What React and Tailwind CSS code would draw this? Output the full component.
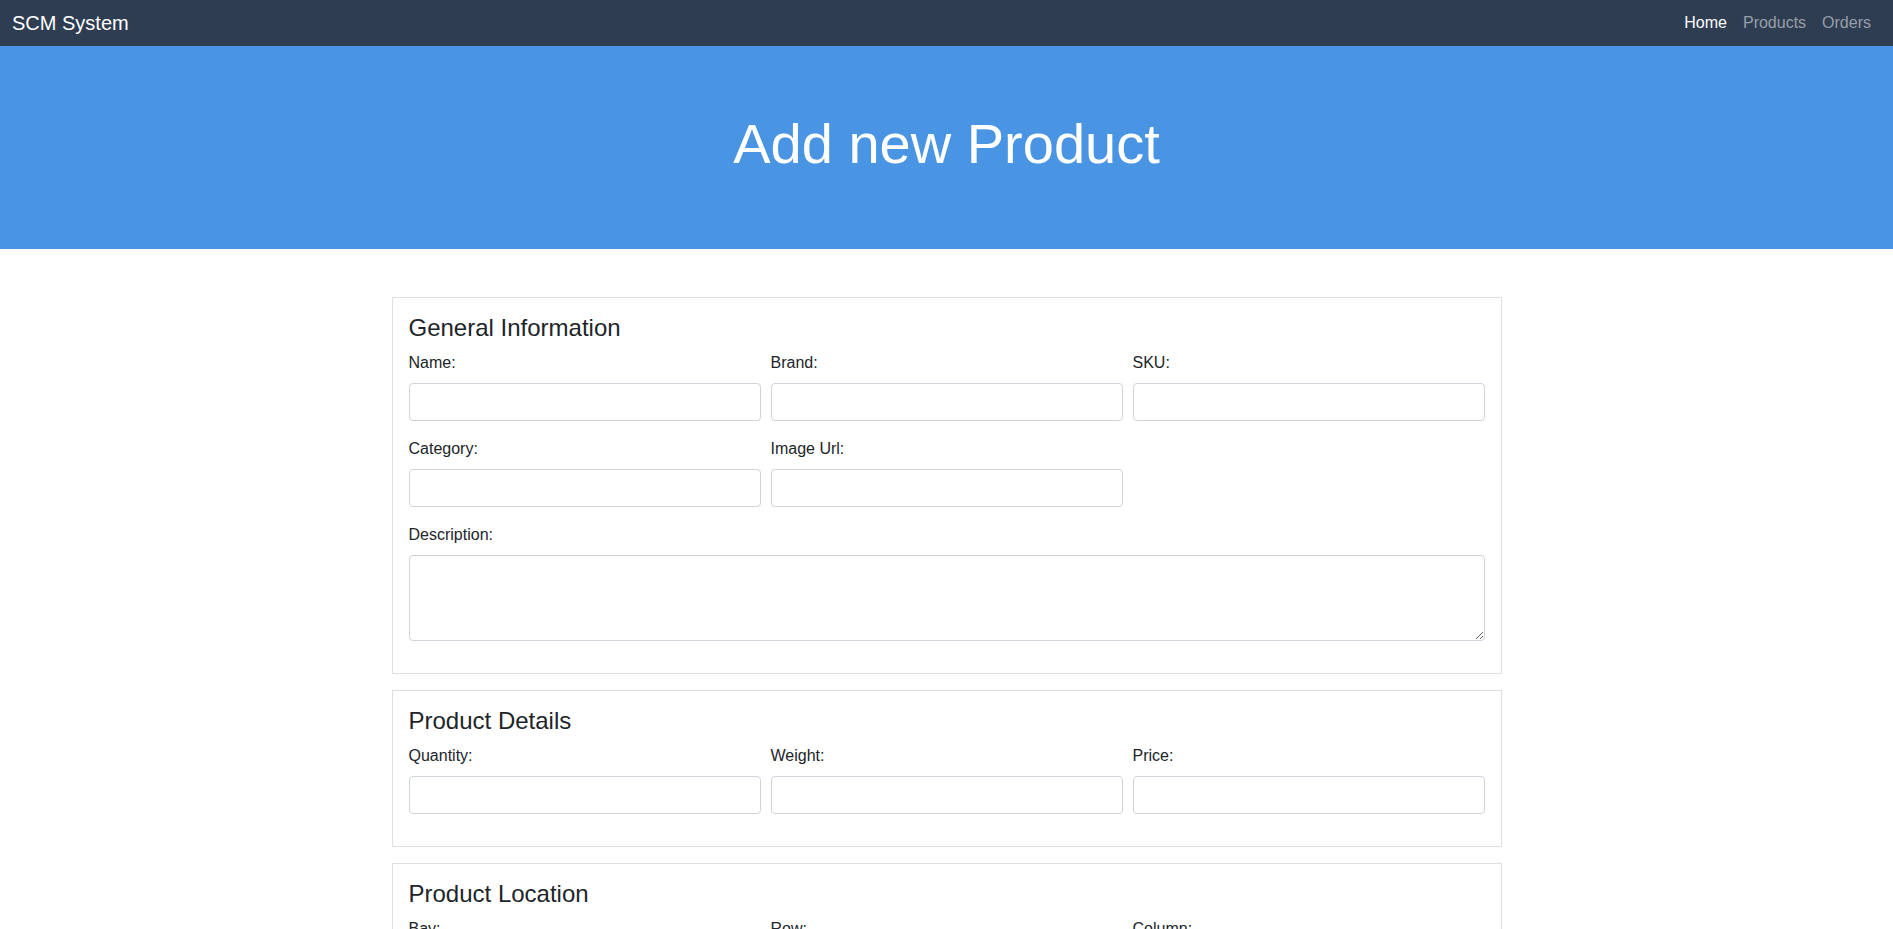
import React from 'react';

const sections = [
  {
    title: 'General Information',
    rows: [
      ['Name:', 'Brand:', 'SKU:'],
      ['Category:', 'Image Url:'],
    ],
    textarea: 'Description:',
  },
  {
    title: 'Product Details',
    rows: [['Quantity:', 'Weight:', 'Price:']],
  },
  {
    title: 'Product Location',
    rows: [['Bay:', 'Row:', 'Column:']],
  },
];

const Field = ({ label }) => (
  <div className="mb-4">
    <label className="block mb-2 text-base leading-6 text-[#212529]">{label}</label>
    <input
      type="text"
      className="block w-full h-[38px] px-3 border border-[#ced4da] rounded bg-white text-base outline-none"
    />
  </div>
);

const Section = ({ section }) => (
  <div className="mb-4 border border-[#dfdfdf] bg-white p-4">
    <h4 className="mb-2 text-2xl leading-[1.2] font-normal text-[#212529]">{section.title}</h4>
    {section.rows.map((row, i) => (
      <div key={i} className="grid grid-cols-3 gap-x-[10px]">
        {row.map(label => <Field key={label} label={label} />)}
      </div>
    ))}
    {section.textarea && (
      <div className="mb-4">
        <label className="block mb-2 text-base leading-6 text-[#212529]">{section.textarea}</label>
        <textarea
          rows={3}
          className="block w-full h-[86px] px-3 py-1.5 border border-[#ced4da] rounded bg-white text-base leading-6 outline-none"
        />
      </div>
    )}
  </div>
);

export default function App() {
  return (
    <div className="min-h-screen bg-white" style={{ fontFamily: '"Liberation Sans", Arial, sans-serif' }}>
      {/* top bar */}
      <nav className="flex items-center justify-between bg-[#2f3d52] pl-3 pr-[14px] py-2">
        <a className="text-xl leading-[30px] text-white">SCM System</a>
        <ul className="flex">
          <li><a className="block px-2 text-base leading-6 text-white">Home</a></li>
          <li><a className="block px-2 text-base leading-6 text-[#979fa9]">Products</a></li>
          <li><a className="block px-2 text-base leading-6 text-[#979fa9]">Orders</a></li>
        </ul>
      </nav>

      {/* hero */}
      <div className="bg-[#4a95e3] py-16 px-8 text-center">
        <h1 className="mb-2 text-[56px] leading-[1.2] font-light text-white">Add new Product</h1>
      </div>

      <div className="mx-auto mt-12 w-[1140px] px-[15px]">
        {sections.map(s => <Section key={s.title} section={s} />)}
      </div>
    </div>
  );
}
